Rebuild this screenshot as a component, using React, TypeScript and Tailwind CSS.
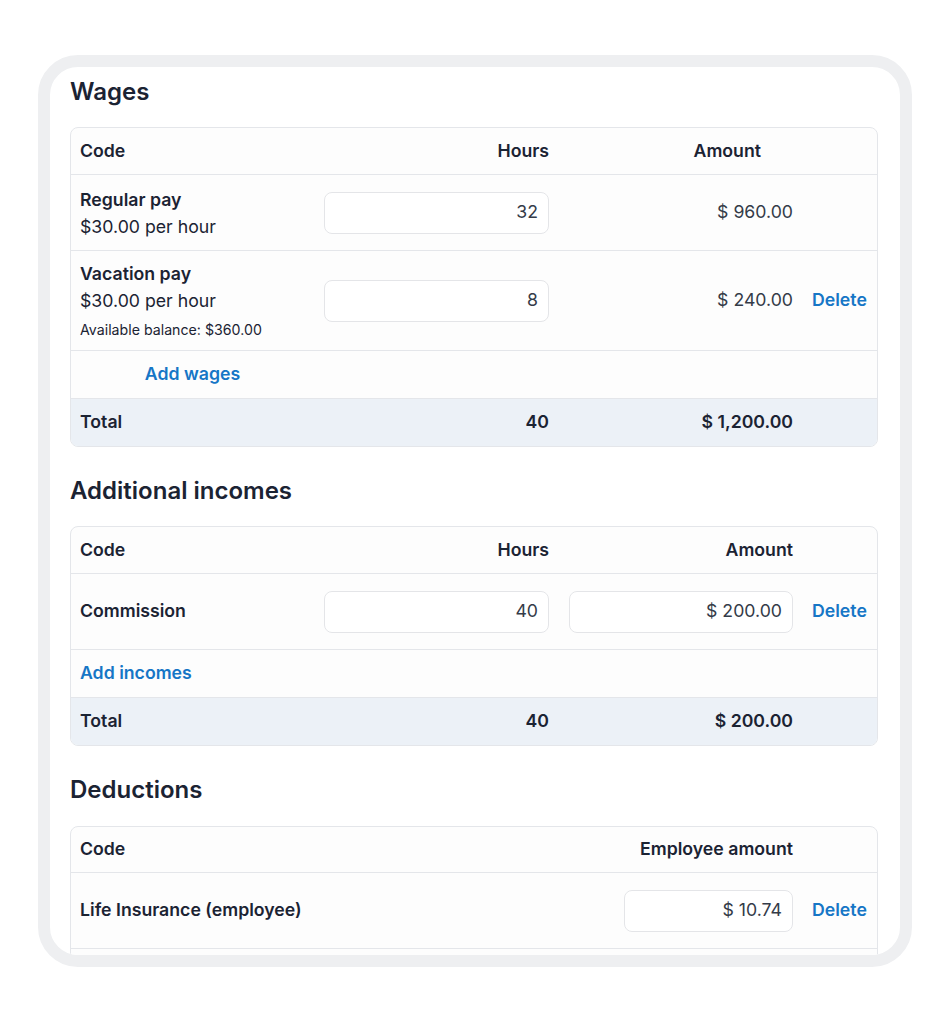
import React from 'react';

const font = { fontFamily: 'Inter, "Noto Sans", sans-serif' };

const cols = 'grid grid-cols-[243px_245px_244px_76px]';

const HeaderRow: React.FC<{ labels: [string, string, string]; amountPad?: string }> = ({ labels, amountPad = 'pr-[10px]' }) => (
  <div className={`${cols} h-[46px] items-center text-[17.7px] font-semibold text-[#1b2333]`}>
    <div className="pl-[9px]">{labels[0]}</div>
    <div className="pr-[10px] text-right">{labels[1]}</div>
    <div className={`${amountPad} text-right`}>{labels[2]}</div>
    <div />
  </div>
);

const Field: React.FC<{ value: string; className?: string }> = ({ value, className = '' }) => (
  <div
    className={`h-[42px] rounded-[8px] border border-[#e4e5e8] bg-white flex items-center justify-end pr-[10px] text-[17.7px] text-[#343b48] ${className}`}
  >
    {value}
  </div>
);

const DeleteLink = () => (
  <span className="pl-[9px] text-[17.7px] font-semibold text-[#1676c6]">Delete</span>
);

const TotalRow: React.FC<{ hours: string; amount: string }> = ({ hours, amount }) => (
  <div className={`${cols} h-[48px] items-center border-t border-[#e4e6ea] bg-[#ecf1f7] text-[17.7px] font-semibold text-[#1b2333]`}>
    <div className="pl-[9px]">Total</div>
    <div className="pr-[10px] text-right">{hours}</div>
    <div className="pr-[10px] text-right">{amount}</div>
    <div />
  </div>
);

export default function App() {
  return (
    <div className="min-h-[1024px] bg-white" style={font}>
      <div className="pl-[38px] pt-[55px]">
        <div className="w-[874px] h-[912px] border-[12px] border-[#eeeff1] rounded-[40px] overflow-hidden bg-white">
          <div className="pl-[20px] pt-[9px]">
            {/* Wages */}
            <h2 className="text-[24px] leading-[32px] font-semibold text-[#1b2333]">Wages</h2>
            <div className="mt-[19px] w-[808px] rounded-[8px] border border-[#e4e6ea] bg-[#fdfdfd] overflow-hidden">
              <HeaderRow labels={['Code', 'Hours', 'Amount']} amountPad="pr-[42px]" />
              <div className={`${cols} h-[76px] items-center border-t border-[#e4e6ea]`}>
                <div className="pl-[9px] text-[17.7px] leading-[27px] text-[#1b2333]">
                  <div className="font-semibold">Regular pay</div>
                  <div>$30.00 per hour</div>
                </div>
                <div className="px-[10px]">
                  <Field value="32" />
                </div>
                <div className="pr-[10px] text-right text-[17.7px] text-[#343b48]">$ 960.00</div>
                <div />
              </div>
              <div className={`${cols} h-[100px] items-center border-t border-[#e4e6ea]`}>
                <div className="pl-[9px] text-[17.7px] leading-[27px] text-[#1b2333]">
                  <div className="font-semibold">Vacation pay</div>
                  <div>$30.00 per hour</div>
                  <div className="mt-[5px] text-[14.2px] leading-[22px]">Available balance: $360.00</div>
                </div>
                <div className="px-[10px]">
                  <Field value="8" />
                </div>
                <div className="pr-[10px] text-right text-[17.7px] text-[#343b48]">$ 240.00</div>
                <DeleteLink />
              </div>
              <div className={`${cols} h-[48px] items-center border-t border-[#e4e6ea]`}>
                <div className="text-center text-[17.7px] font-semibold text-[#1676c6]">Add wages</div>
              </div>
              <TotalRow hours="40" amount="$ 1,200.00" />
            </div>

            {/* Additional incomes */}
            <h2 className="mt-[28px] text-[24px] leading-[32px] font-semibold text-[#1b2333]">Additional incomes</h2>
            <div className="mt-[19px] w-[808px] rounded-[8px] border border-[#e4e6ea] bg-[#fdfdfd] overflow-hidden">
              <HeaderRow labels={['Code', 'Hours', 'Amount']} />
              <div className={`${cols} h-[76px] items-center border-t border-[#e4e6ea]`}>
                <div className="pl-[9px] text-[17.7px] font-semibold text-[#1b2333]">Commission</div>
                <div className="px-[10px]">
                  <Field value="40" />
                </div>
                <div className="px-[10px]">
                  <Field value="$ 200.00" />
                </div>
                <DeleteLink />
              </div>
              <div className={`${cols} h-[48px] items-center border-t border-[#e4e6ea]`}>
                <div className="pl-[9px] text-[17.7px] font-semibold text-[#1676c6]">Add incomes</div>
              </div>
              <TotalRow hours="40" amount="$ 200.00" />
            </div>

            {/* Deductions */}
            <h2 className="mt-[28px] text-[24px] leading-[32px] font-semibold text-[#1b2333]">Deductions</h2>
            <div className="mt-[20px] w-[808px] rounded-[8px] border border-[#e4e6ea] bg-[#fdfdfd] overflow-hidden">
              <div className="grid grid-cols-[488px_244px_76px] h-[45px] items-center text-[17.7px] font-semibold text-[#1b2333]">
                <div className="pl-[9px]">Code</div>
                <div className="pr-[10px] text-right">Employee amount</div>
                <div />
              </div>
              <div className="grid grid-cols-[488px_244px_76px] h-[76px] items-center border-t border-[#e4e6ea]">
                <div className="pl-[9px] text-[17.7px] font-semibold text-[#1b2333]">Life Insurance (employee)</div>
                <div className="flex justify-end pr-[10px]">
                  <Field value="$ 10.74" className="w-[169px]" />
                </div>
                <DeleteLink />
              </div>
              <div className="h-[60px] border-t border-[#e4e6ea]" />
            </div>
          </div>
        </div>
      </div>
    </div>
  );
}
